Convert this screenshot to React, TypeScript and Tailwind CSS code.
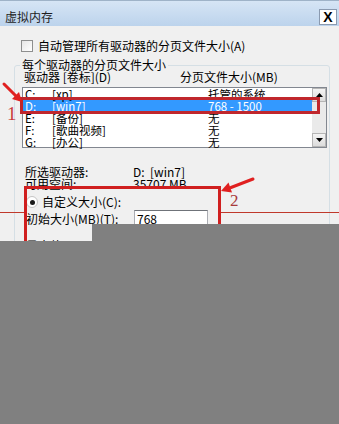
import React from "react";

const drives = [
    { d: "C:", label: "[xp]", size: "托管的系统" },
    { d: "D:", label: "[win7]", size: "768 - 1500", active: true },
    { d: "E:", label: "[备份]", size: "无" },
    { d: "F:", label: "[歌曲视频]", size: "无" },
    { d: "G:", label: "[办公]", size: "无" },
];

const ScrollBtn: React.FC<{ down?: boolean }> = ({ down }) => (
    <div className="flex h-[14px] w-[14px] items-center justify-center border border-[#b5b5b5] bg-gradient-to-b from-[#f4f4f4] to-[#dcdcdc]">
        <svg width="7" height="4" viewBox="0 0 7 4">
            {down ? <polygon points="0,0 7,0 3.5,4" fill="#000" /> : <polygon points="0,4 7,4 3.5,0" fill="#000" />}
        </svg>
    </div>
);

export default function App() {
    return (
        <div className="relative h-[424px] w-[339px] overflow-hidden bg-[#f0f0f0] font-['Noto_Sans_CJK_SC',sans-serif] text-[12px] leading-[12px] text-black">
            {/* 标题栏 */}
            <div className="flex h-[26px] items-center justify-between border-t border-[#9fb3c8] bg-gradient-to-b from-[#d6e5f5] to-[#bcd3ec] pl-[5px] pr-[2px] pt-[6px]">
                <span className="text-[12px] text-[#1e1e1e]">虚拟内存</span>
                <div className="flex h-[16px] w-[18px] items-center justify-center border border-[#8a9ab0] bg-white font-['Liberation_Sans',sans-serif] text-[14px] font-bold">
                    X
                </div>
            </div>

            {/* 自动管理 */}
            <div className="mt-[14px] flex h-[12px] items-center pl-[21px]">
                <div className="h-[12px] w-[12px] border border-[#8e8f8f] bg-gradient-to-br from-[#e6e6e6] to-white" />
                <span className="ml-[5px]">自动管理所有驱动器的分页文件大小(A)</span>
            </div>

            {/* 分组框 */}
            <div className="relative ml-[14px] mt-[13px] h-[400px] w-[316px] rounded-[3px] border border-[#d5dfe5]">
                <span className="absolute -top-[7px] left-[5px] bg-[#f0f0f0] px-[2px]">每个驱动器的分页文件大小</span>

                <div className="mt-[5px] flex h-[12px] items-center pl-[9px]">
                    <span className="w-[156px]">驱动器 [卷标](D)</span>
                    <span>分页文件大小(MB)</span>
                </div>

                <div className="ml-[7px] mt-[4px] flex h-[61px] w-[305px] border border-[#828790] bg-white">
                    <div className="flex-1 text-[11.5px]">
                        {drives.map((r) => (
                            <div
                                key={r.d}
                                className={`flex h-[12px] items-center pl-[2px] ${r.active ? "bg-[#3399ff] text-white" : ""}`}
                            >
                                <span className="w-[27px]">{r.d}</span>
                                <span className="w-[156px]">{r.label}</span>
                                <span>{r.size}</span>
                            </div>
                        ))}
                    </div>
                    <div className="flex w-[14px] flex-col justify-between bg-[#eaeaea]">
                        <ScrollBtn />
                        <ScrollBtn down />
                    </div>
                </div>

                <div className="mt-[18px] flex h-[12px] items-center pl-[10px]">
                    <span className="w-[108px]">所选驱动器:</span>
                    <span>D:&nbsp;&nbsp;[win7]</span>
                </div>
                <div className="flex h-[12px] items-center pl-[10px]">
                    <span className="w-[108px]">可用空间:</span>
                    <span>35707 MB</span>
                </div>

                <div className="mt-[6px] flex h-[12px] items-center pl-[11px]">
                    <div className="flex h-[12px] w-[12px] items-center justify-center rounded-full border border-[#c5c5c5] bg-white">
                        <div className="h-[5px] w-[5px] rounded-full bg-[#1a1a1a]" />
                    </div>
                    <span className="ml-[4px]">自定义大小(C):</span>
                </div>

                <div className="mt-[2px] flex h-[17px] items-center pl-[11px]">
                    <span className="w-[108px]">初始大小(MB)(T):</span>
                    <div className="flex h-[17px] w-[74px] items-center border border-[#abadb3] border-t-[#6f7379] bg-white pl-[2px]">
                        768
                    </div>
                </div>
                <div className="mt-[10px] flex h-[17px] items-center pl-[11px]">
                    <span className="w-[108px]">最大值(MB)(X):</span>
                    <div className="h-[17px] w-[74px] border border-[#abadb3] bg-white" />
                </div>
            </div>

            {/* 标注 */}
            <svg className="pointer-events-none absolute left-0 top-0" width="339" height="424">
                <rect x="21.5" y="98.5" width="297" height="14" fill="none" stroke="#c0272d" strokeWidth="3" />
                <line x1="4" y1="84" x2="16" y2="96" stroke="#e02020" strokeWidth="3" strokeLinecap="round" />
                <polygon points="22,102 12,99 19,92" fill="#e02020" />
                <rect x="25.5" y="187.5" width="194" height="120" fill="none" stroke="#d01f1f" strokeWidth="3" />
                <line x1="253" y1="179" x2="231" y2="187.5" stroke="#e02020" strokeWidth="3" strokeLinecap="round" />
                <polygon points="221,191 232,192.5 228.5,182.5" fill="#e02020" />
                <line x1="0" y1="212.5" x2="24" y2="212.5" stroke="#c0392b" strokeWidth="1" />
                <line x1="221" y1="212.5" x2="339" y2="212.5" stroke="#c0392b" strokeWidth="1" />
            </svg>
            <span className="absolute left-[7px] top-[104px] font-['Liberation_Serif',serif] text-[19px] leading-[19px] text-[#c83a3a]">1</span>
            <span className="absolute left-[230px] top-[192px] font-['Liberation_Serif',serif] text-[17px] leading-[17px] text-[#a83a3a]">2</span>

            {/* 灰色遮罩 */}
            <div className="absolute bottom-0 left-[92px] right-0 top-[224px] bg-[#808080]" />
            <div className="absolute bottom-0 left-0 top-[241px] w-[92px] bg-[#808080]" />
        </div>
    );
}
